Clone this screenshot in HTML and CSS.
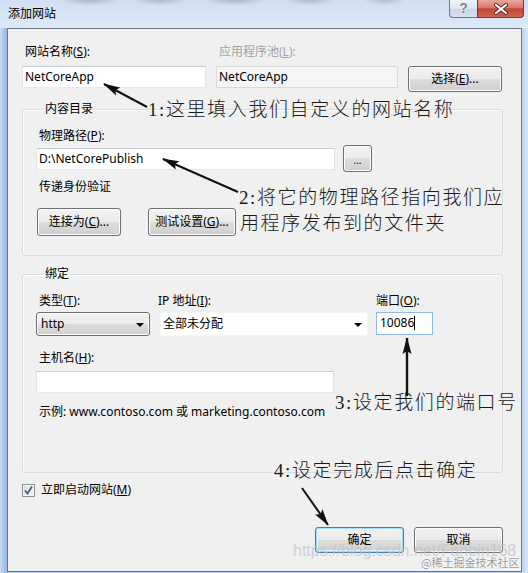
FILE: index.html
```html
<!DOCTYPE html>
<html lang="zh-CN">
<head>
<meta charset="utf-8">
<title>添加网站</title>
<link rel="stylesheet" href="styles.css">
</head>
<body>
<div class="window">
  <div class="titlebar">
    <span class="title">添加网站</span>
    <div class="caption-btns">
      <span class="cap-help">?</span>
      <span class="cap-close">
        <svg width="16" height="12" viewBox="0 0 16 12">
          <path d="M3 2 L13 10 M13 2 L3 10" stroke="#5a2a22" stroke-width="4" stroke-linecap="round"/>
          <path d="M3 2 L13 10 M13 2 L3 10" stroke="#ffffff" stroke-width="2.2" stroke-linecap="round"/>
        </svg>
      </span>
    </div>
  </div>

  <div class="client">
    <div class="top-grid">
      <div class="lbl ind">网站名称(<u>S</u>):</div>
      <div class="lbl ind disabled">应用程序池(<u>L</u>):</div>
      <div></div>
      <div class="input">NetCoreApp</div>
      <div class="input readonly">NetCoreApp</div>
      <button class="btn btn-select">选择(<u>E</u>)...</button>
    </div>

    <fieldset class="group group-content">
      <legend>内容目录</legend>
      <div class="lbl ind">物理路径(<u>P</u>):</div>
      <div class="path-row">
        <div class="input path">D:\NetCorePublish</div>
        <button class="btn btn-browse">...</button>
      </div>
      <div class="lbl ind auth">传递身份验证</div>
      <div class="auth-btns">
        <button class="btn btn-connect">连接为(<u>C</u>)...</button>
        <button class="btn btn-test">测试设置(<u>G</u>)...</button>
      </div>
    </fieldset>

    <fieldset class="group group-binding">
      <legend>绑定</legend>
      <div class="bind-grid">
        <div class="lbl ind">类型(<u>T</u>):</div>
        <div class="lbl ip-lbl">IP 地址(<u>I</u>):</div>
        <div class="lbl">端口(<u>O</u>):</div>
        <div class="combo combo-type"><span>http</span><span class="tri"></span></div>
        <div class="combo combo-ip"><span>全部未分配</span><span class="tri"></span></div>
        <div class="input port">10086<span class="caret"></span></div>
      </div>
      <div class="lbl ind host-lbl">主机名(<u>H</u>):</div>
      <div class="input host"></div>
      <div class="lbl ind example">示例: www.contoso.com 或 marketing.contoso.com</div>
    </fieldset>

    <div class="check-row">
      <span class="checkbox">
        <svg width="11" height="11" viewBox="0 0 11 11"><path d="M2 5.5 L4.5 8.5 L9 1.5" fill="none" stroke="#4a5d92" stroke-width="1.8"/></svg>
      </span>
      <span>立即启动网站(<u>M</u>)</span>
    </div>

    <div class="footer">
      <button class="btn btn-ok">确定</button>
      <button class="btn btn-cancel">取消</button>
    </div>
  </div>

  <div class="note note1">1:这里填入我们自定义的网站名称</div>
  <div class="note note2a">2:将它的物理路径指向我们应</div>
  <div class="note note2b">用程序发布到的文件夹</div>
  <div class="note note3">3:设定我们的端口号</div>
  <div class="note note4">4:设定完成后点击确定</div>

  <svg class="arrows" width="528" height="573" viewBox="0 0 528 573">
    <defs>
      <marker id="ah" markerUnits="userSpaceOnUse" markerWidth="18" markerHeight="10" refX="16" refY="5" orient="auto">
        <path d="M0 0.5 L17 5 L0 9.5 L3 5 Z" fill="#111"/>
      </marker>
    </defs>
    <line x1="147" y1="107" x2="104" y2="84" stroke="#111" stroke-width="2" marker-end="url(#ah)"/>
    <line x1="238" y1="192" x2="163" y2="159" stroke="#111" stroke-width="2" marker-end="url(#ah)"/>
    <line x1="407" y1="396" x2="407" y2="338" stroke="#111" stroke-width="2.4" marker-end="url(#ah)"/>
    <line x1="302" y1="488" x2="328" y2="525" stroke="#111" stroke-width="2" marker-end="url(#ah)"/>
  </svg>

  <div class="wm wm-url">https://blog.csdn.net/Fanbin168</div>
  <div class="wm wm-site">@稀土掘金技术社区</div>
</div>
</body>
</html>
```

FILE: styles.css
```css
* { box-sizing: border-box; }

body {
  margin: 0;
  font-family: "Noto Sans", "Noto Sans CJK SC", sans-serif;
  font-size: 12px;
  line-height: 16px;
  color: #000;
}

.window {
  position: relative;
  width: 528px;
  height: 573px;
  overflow: hidden;
  background: linear-gradient(90deg, #c9ddf2 0, #a8c6e9 4px, #97b9e2 6px, #b6cfeb 8px, #b6cfeb 520px, #d6e5f5 528px);
  display: flex;
  flex-direction: column;
}

/* ---------- title bar ---------- */
.titlebar {
  height: 28px;
  flex: none;
  display: flex;
  align-items: flex-start;
  background:
    radial-gradient(ellipse 30px 6px at 90px 0, rgba(120,135,150,.45), transparent),
    radial-gradient(ellipse 28px 6px at 160px 0, rgba(120,135,150,.4), transparent),
    radial-gradient(ellipse 32px 6px at 235px 0, rgba(120,135,150,.45), transparent),
    radial-gradient(ellipse 26px 6px at 310px 0, rgba(120,135,150,.4), transparent),
    radial-gradient(ellipse 22px 6px at 385px 0, rgba(120,135,150,.35), transparent),
    linear-gradient(#cfe0f2, #dde9f6);
}

.title {
  margin: 6px 0 0 8px;
  line-height: 16px;
}

.caption-btns {
  margin-left: auto;
  margin-right: 4px;
  display: flex;
  height: 18px;
}

.cap-help {
  width: 28px;
  height: 18px;
  border: 1px solid #687789;
  border-top: none;
  border-right: none;
  border-radius: 0 0 0 4px;
  background: linear-gradient(#eef3f9 0%, #dce6f2 50%, #c8d5e5 51%, #d8e2ee 100%);
  color: #7c8898;
  font-family: "Liberation Sans", sans-serif;
  font-weight: bold;
  font-size: 14px;
  line-height: 17px;
  text-align: center;
  text-shadow: 0 0 2px #fff;
}

.cap-close {
  width: 47px;
  height: 18px;
  border: 1px solid #6e3d36;
  border-top: none;
  border-radius: 0 0 4px 0;
  background: linear-gradient(#e8a89c 0%, #d7786a 45%, #c24632 52%, #d0624f 100%);
  display: flex;
  align-items: center;
  justify-content: center;
}

/* ---------- client area ---------- */
.client {
  height: 544px;
  margin: 0 6px 1px 7px;
  border: 1px solid #66778a;
  background: #f0f0f0;
  padding: 15px 18px 0 14px;
}

.lbl { line-height: 16px; white-space: nowrap; }
.lbl.ind { padding-left: 3px; }
.lbl.disabled { color: #a2a2a2; }

.top-grid {
  display: grid;
  grid-template-columns: 184px 182px 94px;
  grid-template-rows: 16px auto;
  column-gap: 10px;
  row-gap: 6px;
  align-items: start;
}

.input {
  height: 22px;
  border: 1px solid;
  border-color: #c9ccd2 #e0e3e8 #e6e9ee #e0e3e8;
  background: #fff;
  padding: 0 2px;
  line-height: 20px;
  white-space: nowrap;
}

.input.readonly {
  background: #f5f5f5;
  border-color: #dadada;
}

.btn {
  font: inherit;
  color: #000;
  padding: 0;
  border: 1px solid #707070;
  border-radius: 3px;
  background: linear-gradient(#f2f2f2 0%, #ebebeb 49%, #dddddd 50%, #cfcfcf 100%);
  box-shadow: inset 0 0 0 1px #fbfbfb;
  line-height: 16px;
  white-space: nowrap;
}

.btn-select { width: 94px; height: 26px; }

/* ---------- group boxes ---------- */
.group {
  margin: 9px 0 0 0;
  min-width: 0;
  border: 1px solid #d6dde3;
  border-radius: 3px;
  box-shadow: inset 1px 1px 0 #fdfdfd;
  padding: 11px 0 19px 13px;
}

.group legend {
  margin-left: 7px;
  padding: 0 2px;
  line-height: 16px;
}

.path-row {
  margin-top: 1px;
  height: 27px;
  display: flex;
  align-items: center;
  gap: 8px;
}

.input.path { width: 299px; }

.btn-browse {
  width: 29px;
  height: 27px;
  font-size: 10px;
  line-height: 10px;
  padding-top: 3px;
}

.auth { margin-top: 7px; }

.auth-btns {
  margin-top: 13px;
  padding-left: 1px;
  display: flex;
  gap: 27px;
}

.btn-connect { width: 84px; height: 28px; }
.btn-test { width: 88px; height: 28px; }

.group-binding {
  margin-top: 10px;
  padding-bottom: 52px;
}

.bind-grid {
  display: grid;
  grid-template-columns: 124px 216px 57px;
  row-gap: 3px;
}

.ip-lbl { margin-left: -2px; }

.combo {
  height: 24px;
  display: flex;
  align-items: center;
  justify-content: space-between;
  padding: 0 5px 0 3px;
}

.combo-type {
  width: 114px;
  border: 1px solid #707070;
  border-radius: 3px;
  background: linear-gradient(#f2f2f2 0%, #ebebeb 49%, #dddddd 50%, #cfcfcf 100%);
  box-shadow: inset 0 0 0 1px #fbfbfb;
  padding-left: 4px;
}

.combo-ip {
  width: 208px;
  background: #fff;
  border: 1px solid #f6f6f6;
  padding-left: 2px;
}

.tri {
  width: 0;
  height: 0;
  border-left: 4px solid transparent;
  border-right: 4px solid transparent;
  border-top: 4px solid #000;
  margin-top: 2px;
}

.input.port {
  width: 57px;
  height: 23px;
  border-color: #8cbbe8;
  padding-left: 3px;
}

.caret {
  display: inline-block;
  width: 1px;
  height: 14px;
  background: #000;
  vertical-align: -3px;
}

.host-lbl { margin-top: 14px; }

.input.host {
  width: 298px;
  margin-top: 5px;
}

.example { margin-top: 11px; }

/* ---------- bottom ---------- */
.check-row {
  margin-top: 9px;
  height: 16px;
  display: flex;
  align-items: center;
  gap: 6px;
}

.checkbox {
  width: 13px;
  height: 13px;
  border: 1px solid #8e8f8f;
  background: linear-gradient(135deg, #dcdcdc, #f8f8f8);
  box-shadow: inset 0 0 0 1px #f4f4f4;
  display: flex;
  align-items: center;
  justify-content: center;
}

.footer {
  margin-top: 29px;
  display: flex;
  justify-content: flex-end;
  gap: 10px;
}

.btn-ok, .btn-cancel { width: 89px; height: 26px; }

.btn-ok {
  border-color: #3c7fb1;
  box-shadow: inset 0 0 0 1px #a8dcf6, inset 0 0 0 2px #e4f3fb;
}

/* ---------- annotations ---------- */
.note {
  position: absolute;
  font-family: "Liberation Serif", "Noto Sans CJK SC", serif;
  font-weight: 300;
  font-size: 19px;
  line-height: 20px;
  letter-spacing: 1.6px;
  color: #1a1a1a;
  white-space: nowrap;
}

.note1 { left: 148px; top: 100px; }
.note2a { left: 239px; top: 188px; }
.note2b { left: 240px; top: 214px; }
.note3 { left: 335px; top: 393px; }
.note4 { left: 274px; top: 461px; }

.arrows {
  position: absolute;
  left: 0;
  top: 0;
  pointer-events: none;
}

.wm {
  position: absolute;
  white-space: nowrap;
  pointer-events: none;
}

.wm-url {
  left: 293px;
  top: 542px;
  font-family: "Liberation Sans", sans-serif;
  font-size: 16px;
  line-height: 18px;
  color: rgba(190, 196, 204, 0.75);
}

.wm-site {
  left: 421px;
  top: 556px;
  font-family: "Noto Sans CJK SC", sans-serif;
  font-size: 11px;
  line-height: 13px;
  color: #9a9a9a;
  text-shadow: 0 0 2px #fff, 0 0 1px #fff;
}
```
